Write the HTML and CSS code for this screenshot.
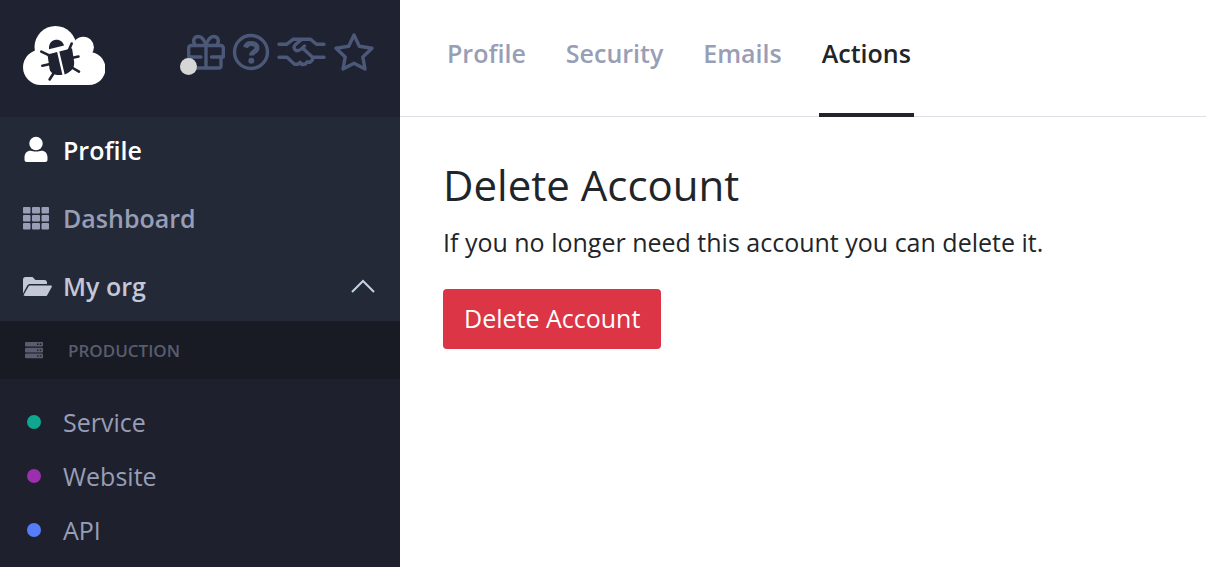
FILE: index.html
```html
<!DOCTYPE html>
<html lang="en">
<head>
<meta charset="utf-8">
<meta name="viewport" content="width=device-width, initial-scale=1">
<title>Delete Account</title>
<link rel="stylesheet" href="styles.css">
</head>
<body>
<div class="app">
  <aside class="sidebar">
    <div class="brand-bar">
      <a class="logo" href="#" aria-label="Home">
        <svg width="82" height="59" viewBox="0 0 82 59">
          <g fill="#fff">
            <circle cx="32.5" cy="21" r="21"/>
            <circle cx="60.3" cy="21.3" r="10.6"/>
            <path d="M17.7 23.6H54L66 26a16.5 16.5 0 0 1 0 33H17.7a17.7 17.7 0 0 1 0-35.4z"/>
          </g>
          <path fill="#1f2230" d="M26 23.2C25.6 17 29 14 33 13.7c4-.3 7 2 8 5.8z"/>
          <path fill="#1f2230" d="M24.500 28.500l9.600-2.400 5.300 22.700c-6 1-11.500-.5-12.800-5.500zM36.300 25.600L49 22.200l2 12.500c.9 6-1.300 10.500-9.300 13.700z"/>
          <path fill="none" stroke="#1f2230" stroke-width="2.600" stroke-linecap="round" d="M18.300 25.600l9 4.300M19.300 39.700l8-1.600M26.600 53.500l4-6.300M48.700 17.500l-3 7M55.500 30.500l-7 1.600M56 45.700l-8-4.700"/>
        </svg>
      </a>
      <div class="tools">
        <button class="tool gift" aria-label="What's new">
          <svg width="38" height="38" viewBox="0 0 38 38" class="line-icon">
            <path d="M1.700 24v-9a2.500 2.500 0 0 1 2.500-2.500h29.600a2.500 2.500 0 0 1 2.500 2.500v9M1.700 24H14M24.500 24h11.800"/>
            <path d="M4 24v9a2 2 0 0 0 2 2h26a2 2 0 0 0 2-2V24M19 12.500V35M19 12.500C17 6 15 3.500 11.500 3.500 6.500 3.500 5.500 8 8 12M19 12.500C21 6 23 3.500 26.500 3.500c5 0 6 4.500 3.500 8.500"/>
          </svg>
          <span class="notice"></span>
        </button>
        <button class="tool" aria-label="Help">
          <svg width="38" height="38" viewBox="0 0 38 38" class="line-icon">
            <circle cx="19" cy="19" r="16.500"/>
            <path class="bold" d="M13.500 14.500c.8-3 2.800-4 5.500-4 3.500 0 6 1.500 6 4.500 0 4-5.500 3.500-5.500 7.500"/>
            <circle cx="19.300" cy="27.700" r="3" class="solid"/>
          </svg>
        </button>
        <button class="tool" aria-label="Partners">
          <svg width="50" height="38" viewBox="0 0 50 38" class="line-icon">
            <path d="M2 11.300h7.500l6.500-5h17.500l6 5H47M2 24.300h8l7.500 7h3.500l2-2 2 2.200 3.500-.5 1.500-2 3 .2 2.500-2.500.5-2.400H47M24.500 6.500l-6.500 5.500c-2 2.500-.5 5.500 2.500 5.700 3-.1 4.500-2.500 7-4.700M25.500 15l10 9.300"/>
          </svg>
        </button>
        <button class="tool" aria-label="Favorites">
          <svg width="40" height="38" viewBox="0 0 40 38" class="line-icon">
            <path d="M20 2l5.300 11.200L38 15.200l-9.200 8.700L31 36l-11-5.800L9 36l2.200-12.100L2 15.200l12.700-2z"/>
          </svg>
        </button>
      </div>
    </div>

    <nav class="main-nav" aria-label="Main">
      <a class="nav-item active" href="#">
        <span class="nav-icon"><svg width="28" height="28" viewBox="0 0 28 28" fill="currentColor"><circle cx="13" cy="7.500" r="6.700"/><path d="M1.500 21.500c0-4 2.500-6.700 6-6.700 2 0 3 .8 5.500.8s3.500-.8 5.500-.8c3.500 0 6 2.700 6 6.700v2.200c0 1.300-1 2.300-2.300 2.300H3.800c-1.300 0-2.300-1-2.300-2.300z"/></svg></span>
        <span>Profile</span>
      </a>
      <a class="nav-item" href="#">
        <span class="nav-icon"><svg width="28" height="28" viewBox="0 0 28 28" fill="currentColor"><rect x="0" y="3" width="7.500" height="6.500" rx="1"/><rect x="9" y="3" width="8" height="6.500" rx="1"/><rect x="18.500" y="3" width="7.500" height="6.500" rx="1"/><rect x="0" y="11" width="7.500" height="6.500" rx="1"/><rect x="9" y="11" width="8" height="6.500" rx="1"/><rect x="18.500" y="11" width="7.500" height="6.500" rx="1"/><rect x="0" y="19" width="7.500" height="6.500" rx="1"/><rect x="9" y="19" width="8" height="6.500" rx="1"/><rect x="18.500" y="19" width="7.500" height="6.500" rx="1"/></svg></span>
        <span>Dashboard</span>
      </a>
      <button class="nav-item org" aria-expanded="true">
        <span class="nav-icon"><svg width="29" height="28" viewBox="0 0 29 28" fill="currentColor"><path d="M0 21.500V7.500C0 6 1 5 2.400 5H9.500l3 3h9C23 8 24 9 24 10.500V12H7.500c-1.500 0-2.600.6-3.300 1.800zM5.500 14.600c.4-.8 1-1.100 1.800-1.100H27.800c1 0 1.400.8.9 1.600L24.500 22.800c-.4.800-1 1.200-1.900 1.200H1.800c-1 0-1.400-.8-.9-1.600z"/></svg></span>
        <span>My org</span>
        <svg class="chevron" width="24" height="14" viewBox="0 0 24 14"><path d="M1 13l11-11 11 11"/></svg>
      </button>
    </nav>

    <h2 class="group-title">
      <svg width="20" height="18" viewBox="0 0 20 18"><g fill="#595d6e"><rect x="1" y="1" width="18" height="4.600" rx="1"/><rect x="1" y="6.800" width="18" height="4.600" rx="1"/><rect x="1" y="12.600" width="18" height="4.600" rx="1"/></g><path stroke="#181a24" stroke-width="1.400" d="M13 3.300h1.500M15.800 3.300h1.500M13 9.100h1.500M15.800 9.100h1.500M13 14.900h1.500M15.800 14.900h1.500"/></svg>
      <span>PRODUCTION</span>
    </h2>

    <ul class="apps">
      <li><a href="#"><span class="dot green"></span>Service</a></li>
      <li><a href="#"><span class="dot purple"></span>Website</a></li>
      <li><a href="#"><span class="dot blue"></span>API</a></li>
    </ul>
  </aside>

  <main class="page">
    <nav class="tabs" aria-label="Account">
      <a class="tab" href="#">Profile</a>
      <a class="tab" href="#">Security</a>
      <a class="tab" href="#">Emails</a>
      <a class="tab current" href="#" aria-current="page">Actions</a>
    </nav>
    <section class="content">
      <h1>Delete Account</h1>
      <p>If you no longer need this account you can delete it.</p>
      <button class="danger">Delete Account</button>
    </section>
  </main>
</div>
</body>
</html>
```
FILE: styles.css
```css
* { box-sizing: border-box; }

body {
  margin: 0;
  font-family: "Open Sans", "Noto Sans", sans-serif;
  font-size: 25px;
  line-height: 37px;
  color: #212529;
  background: #fff;
}

a { color: inherit; text-decoration: none; }
button { font: inherit; color: inherit; border: 0; background: none; padding: 0; cursor: pointer; }
svg { display: block; flex: none; }

.app { display: flex; min-height: 100vh; }

.sidebar { flex: 0 0 400px; background: #1e212d; color: #979eb6; }

.brand-bar {
  display: flex;
  justify-content: space-between;
  align-items: flex-start;
  height: 117px;
  padding: 26px 26px 0 23px;
  background: #1f2230;
}
.tools { display: flex; gap: 7px; padding-top: 7px; }
.tool { position: relative; }
.line-icon {
  fill: none;
  stroke: #4c5878;
  stroke-width: 3.4px;
  stroke-linecap: round;
  stroke-linejoin: round;
}
.line-icon .solid { fill: #4c5878; stroke: none; }
.line-icon .bold { stroke-width: 5px; stroke-linecap: butt; }
.notice {
  position: absolute;
  left: -7px;
  bottom: -4px;
  width: 17px;
  height: 17px;
  border-radius: 50%;
  background: #d6d6d6;
}

.main-nav { background: #242938; }
.nav-item {
  display: flex;
  align-items: center;
  width: 100%;
  height: 68px;
  padding: 0 25px 2px 23px;
  font-weight: 600;
  text-align: left;
}
.nav-item.active { color: #fff; }
.nav-item.org { color: #c3c7d6; }
.nav-icon { width: 40px; }
.chevron { margin-left: auto; fill: none; stroke: #c3d3e3; stroke-width: 2px; }

.group-title {
  display: flex;
  align-items: center;
  gap: 24px;
  height: 58px;
  margin: 0;
  padding: 0 24px;
  font-size: 17px;
  font-weight: 600;
  color: #595d6e;
  background: #181a24;
}

.apps { list-style: none; margin: 0; padding: 16px 0; }
.apps a { display: flex; align-items: center; gap: 22px; height: 54px; padding: 0 27px; }
.dot { width: 14px; height: 14px; border-radius: 50%; }
.green { background: #0fa78f; }
.purple { background: #9b2fae; }
.blue { background: #567df8; }

.page { flex: 1; min-width: 0; }
.tabs {
  display: flex;
  gap: 34px;
  height: 117px;
  padding: 0 44px;
  border-bottom: 1px solid #dee0e6;
}
.tab {
  height: 117px;
  padding: 35px 3px 0;
  font-weight: 600;
  color: #979eb6;
}
.tab.current { color: #212529; border-bottom: 4px solid #22232d; }

.content { padding: 42px 43px; }
h1 { margin: 0 0 13px; font-size: 42px; line-height: 52px; font-weight: 400; }
p { margin: 0 0 28px; }
.danger { height: 60px; padding: 0 21px 2px; border-radius: 4px; color: #fff; background: #dc3545; }
```
